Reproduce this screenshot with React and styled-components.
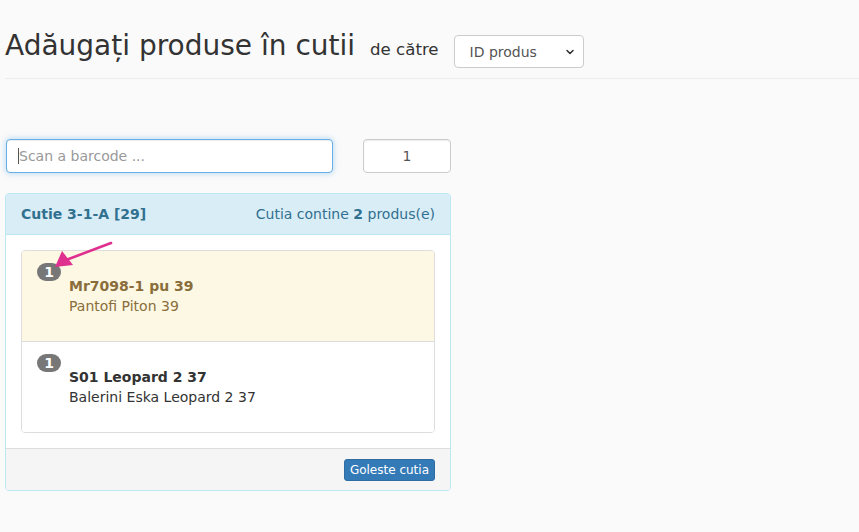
import React from "react";
import styled, { createGlobalStyle } from "styled-components";

const Global = createGlobalStyle`
  html, body { margin: 0; padding: 0; background: #fafafa; }
  body { font-family: "DejaVu Sans", "Liberation Sans", sans-serif; font-size: 14px; color: #333; }
  * { box-sizing: border-box; }
`;

const Page = styled.div`
  width: 859px;
  height: 532px;
  overflow: hidden;
  padding-left: 5px;
`;

const Header = styled.div`
  display: flex;
  align-items: center;
  height: 79px;
  padding-top: 25px;
  padding-bottom: 12px;
  border-bottom: 1px solid #ececec;
`;

const Title = styled.h1`
  margin: 0;
  font-size: 28px;
  font-weight: 400;
  color: #333;
`;

const By = styled.span`
  margin-left: 15px;
  margin-top: 8px;
  font-size: 16.6px;
  color: #333;
`;

const Select = styled.div`
  margin-left: 15px;
  margin-top: 12px;
  width: 130px;
  height: 33px;
  border: 1px solid #ccc;
  border-radius: 4px;
  background: #fff;
  display: flex;
  align-items: center;
  justify-content: space-between;
  padding: 0 8px 0 15px;
  font-size: 14px;
  color: #555;
`;

const Controls = styled.div`
  display: flex;
  gap: 30px;
  margin-top: 60px;
  padding-left: 1px;
`;

const InputWrap = styled.div`
  position: relative;
`;

const Input = styled.input`
  width: ${p => p.$w}px;
  height: 34px;
  border: 1px solid ${p => (p.$focus ? "#66afe9" : "#ccc")};
  border-radius: 4px;
  background: #fff;
  padding: 6px 12px;
  font-family: inherit;
  font-size: 14px;
  color: #555;
  text-align: ${p => p.$align || "left"};
  outline: none;
  box-shadow: ${p =>
    p.$focus ? "inset 0 1px 1px rgba(0,0,0,.075), 0 0 6px rgba(102,175,233,.5)" : "inset 0 1px 1px rgba(0,0,0,.075)"};
  &::placeholder { color: #999; }
`;

const Caret = styled.span`
  position: absolute;
  left: 12px;
  top: 9px;
  width: 1px;
  height: 16px;
  background: #555;
`;

const Panel = styled.div`
  margin-top: 20px;
  width: 446px;
  border: 1px solid #bce8f1;
  border-radius: 4px;
  background: #fff;
  overflow: hidden;
`;

const PanelHeading = styled.div`
  display: flex;
  justify-content: space-between;
  align-items: center;
  height: 41px;
  padding: 0 15px;
  background: #d9edf7;
  color: #31708f;
  border-bottom: 1px solid #bce8f1;
`;

const BoxName = styled.span`
  font-weight: 700;
`;

const PanelBody = styled.div`
  padding: 15px;
`;

const List = styled.div`
  border: 1px solid #ddd;
  border-radius: 4px;
`;

const Item = styled.div`
  position: relative;
  height: ${p => p.$h}px;
  padding: 12px 15px 0;
  background: ${p => (p.$warn ? "#fcf8e3" : "#fff")};
  color: ${p => (p.$warn ? "#8a6d3b" : "#333")};
  &:first-child { border-radius: 3px 3px 0 0; }
  &:last-child { border-radius: 0 0 3px 3px; }
  & + & { border-top: 1px solid #ddd; }
`;

const Badge = styled.span`
  display: inline-block;
  vertical-align: top;
  min-width: 24px;
  height: 18px;
  border-radius: 10px;
  background: #777;
  color: #fff;
  font-weight: 700;
  font-size: 14px;
  line-height: 18px;
  text-align: center;
`;

const ItemText = styled.div`
  padding-left: 32px;
  margin-top: -5px;
`;

const ItemTitle = styled.div`
  font-weight: 700;
  line-height: 20px;
`;

const ItemDesc = styled.div`
  line-height: 20px;
`;

const Arrow = styled.svg`
  position: absolute;
  left: 0;
  top: -10px;
  overflow: visible;
`;

const PanelFooter = styled.div`
  display: flex;
  justify-content: flex-end;
  align-items: center;
  height: 42px;
  padding: 0 15px;
  background: #f5f5f5;
  border-top: 1px solid #ddd;
`;

const Button = styled.button`
  height: 22px;
  padding: 1px 5px;
  border: 1px solid #2e6da4;
  border-radius: 3px;
  background: #337ab7;
  color: #fff;
  font-family: inherit;
  font-size: 12px;
  cursor: pointer;
`;

const items = [
  { code: "Mr7098-1 pu 39", name: "Pantofi Piton 39", qty: 1, warn: true, h: 90 },
  { code: "S01 Leopard 2 37", name: "Balerini Eska Leopard 2 37", qty: 1, warn: false, h: 91 },
];

export default function App() {
  return (
    <Page>
      <Global />
      <Header>
        <Title>Adăugați produse în cutii</Title>
        <By>de către</By>
        <Select>
          <span>ID produs</span>
          <svg width="10" height="10" viewBox="0 0 10 10">
            <path d="M2 3.5 L5 6.5 L8 3.5" fill="none" stroke="#333" strokeWidth="1.6" strokeLinecap="round" strokeLinejoin="round" />
          </svg>
        </Select>
      </Header>
      <Controls>
        <InputWrap>
          <Input $w={327} $focus placeholder="Scan a barcode ..." />
          <Caret />
        </InputWrap>
        <Input $w={88} $align="center" defaultValue="1" />
      </Controls>
      <Panel>
        <PanelHeading>
          <BoxName>Cutie 3-1-A [29]</BoxName>
          <span>
            Cutia contine <b>2</b> produs(e)
          </span>
        </PanelHeading>
        <PanelBody>
          <List>
            {items.map((it, i) => (
              <Item key={i} $warn={it.warn} $h={it.h}>
                <Badge>{it.qty}</Badge>
                <ItemText>
                  <ItemTitle>{it.code}</ItemTitle>
                  <ItemDesc>{it.name}</ItemDesc>
                </ItemText>
                {i === 0 && (
                  <Arrow width="100" height="30">
                    <line x1="89" y1="2" x2="44" y2="19" stroke="#e0308f" strokeWidth="2.6" strokeLinecap="round" />
                    <path d="M33 26 L40 10 L51 24 Z" fill="#e0308f" />
                  </Arrow>
                )}
              </Item>
            ))}
          </List>
        </PanelBody>
        <PanelFooter>
          <Button>Goleste cutia</Button>
        </PanelFooter>
      </Panel>
    </Page>
  );
}
